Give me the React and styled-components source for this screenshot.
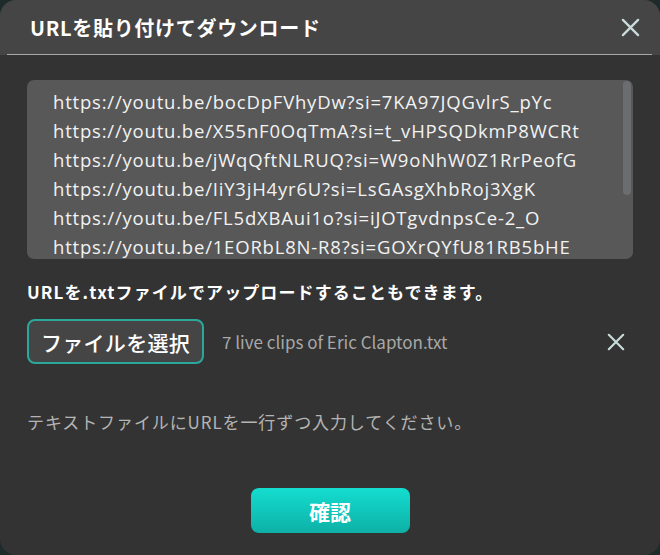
import React from 'react'
import styled, { createGlobalStyle } from 'styled-components'

const GlobalStyle = createGlobalStyle`
	html, body {
		margin: 0;
		padding: 0;
		background: #1d2b2b;
	}
	body {
		font-family: "Noto Sans CJK JP", "Noto Sans", sans-serif;
	}
`

const urls = [
	'https://youtu.be/bocDpFVhyDw?si=7KA97JQGvlrS_pYc',
	'https://youtu.be/X55nF0OqTmA?si=t_vHPSQDkmP8WCRt',
	'https://youtu.be/jWqQftNLRUQ?si=W9oNhW0Z1RrPeofG',
	'https://youtu.be/IiY3jH4yr6U?si=LsGAsgXhbRoj3XgK',
	'https://youtu.be/FL5dXBAui1o?si=iJOTgvdnpsCe-2_O',
	'https://youtu.be/1EORbL8N-R8?si=GOXrQYfU81RB5bHE',
]

const Dialog = styled.div`
	width: 660px;
	height: 555px;
	background: #333333;
	border-radius: 16px;
	overflow: hidden;
	display: flex;
	flex-direction: column;
`
const Header = styled.div`
	height: 55px;
	background: #454545;
	display: flex;
	align-items: center;
	justify-content: space-between;
	padding: 0 20px 0 30px;
	box-sizing: border-box;
	position: relative;
	&::after {
		content: '';
		position: absolute;
		left: 7px;
		right: 8px;
		bottom: 0;
		height: 1px;
		background: #a9a9a9;
	}
`
const Title = styled.h1`
	margin: 0;
	font-size: 20px;
	font-weight: 700;
	color: #ffffff;
	letter-spacing: 0.7px;
`
const CloseBtn = styled.button`
	border: 0;
	background: none;
	padding: 0;
	width: ${ p => p.size }px;
	height: ${ p => p.size }px;
	display: flex;
	align-items: center;
	justify-content: center;
	cursor: pointer;
`
const Body = styled.div`
	flex: 1;
	padding: 25px 27px 0 27px;
	display: flex;
	flex-direction: column;
`
const UrlBox = styled.div`
	height: 179px;
	background: #585858;
	border-radius: 7px;
	padding: 7px 0 0 26px;
	box-sizing: border-box;
	display: flex;
	justify-content: space-between;
	overflow: hidden;
`
const UrlList = styled.div`
	font-family: "Open Sans", "Noto Sans", sans-serif;
	font-size: 18.5px;
	line-height: 29px;
	letter-spacing: 0.8px;
	color: #f2f2f2;
	white-space: nowrap;
`
const Scrollbar = styled.div`
	width: 8px;
	height: 114px;
	margin: -6px 2px 0 0;
	border-radius: 4px;
	background: #6b6d70;
`
const Note = styled.div`
	margin-top: 21px;
	font-size: 17px;
	font-weight: 700;
	color: #ffffff;
	line-height: 24px;
	letter-spacing: 1.1px;
`
const FileRow = styled.div`
	margin-top: 15px;
	display: flex;
	align-items: center;
`
const SelectBtn = styled.button`
	width: 177px;
	height: 45px;
	border: 2px solid #2aa89c;
	border-radius: 8px;
	background: #454545;
	color: #ffffff;
	font-family: inherit;
	font-size: 21px;
	font-weight: 500;
	letter-spacing: 0.3px;
	cursor: pointer;
`
const FileName = styled.span`
	margin-left: 18px;
	flex: 1;
	font-size: 17px;
	color: #a8a8a8;
`
const Hint = styled.div`
	margin-top: 46px;
	font-size: 17px;
	color: #b4b4b4;
	line-height: 24px;
	letter-spacing: 0.9px;
`
const Footer = styled.div`
	margin-top: auto;
	padding-bottom: 22px;
	display: flex;
	justify-content: center;
`
const Confirm = styled.button`
	width: 159px;
	height: 45px;
	border: 0;
	border-radius: 8px;
	background: linear-gradient(#14ddd0, #0eb0a6);
	color: #ffffff;
	font-family: inherit;
	font-size: 21px;
	font-weight: 700;
	cursor: pointer;
`

const Cross = ({ size }) => (
	<svg width={ size } height={ size } viewBox="0 0 20 20">
		<path d="M2 2 L18 18 M18 2 L2 18" stroke="#c9dcdb" strokeWidth="2.4" strokeLinecap="round" />
	</svg>
)

const App = () => (
	<>
		<GlobalStyle />
		<Dialog>
			<Header>
				<Title>URLを貼り付けてダウンロード</Title>
				<CloseBtn size={ 20 }><Cross size={ 19 } /></CloseBtn>
			</Header>
			<Body>
				<UrlBox>
					<UrlList>
						{ urls.map(u => <div key={ u }>{ u }</div>) }
					</UrlList>
					<Scrollbar />
				</UrlBox>
				<Note>URLを.txtファイルでアップロードすることもできます。</Note>
				<FileRow>
					<SelectBtn>ファイルを選択</SelectBtn>
					<FileName>7 live clips of Eric Clapton.txt</FileName>
					<CloseBtn size={ 20 } style={{ marginRight: 7 }}><Cross size={ 18 } /></CloseBtn>
				</FileRow>
				<Hint>テキストファイルにURLを一行ずつ入力してください。</Hint>
				<Footer>
					<Confirm>確認</Confirm>
				</Footer>
			</Body>
		</Dialog>
	</>
)

export default App
